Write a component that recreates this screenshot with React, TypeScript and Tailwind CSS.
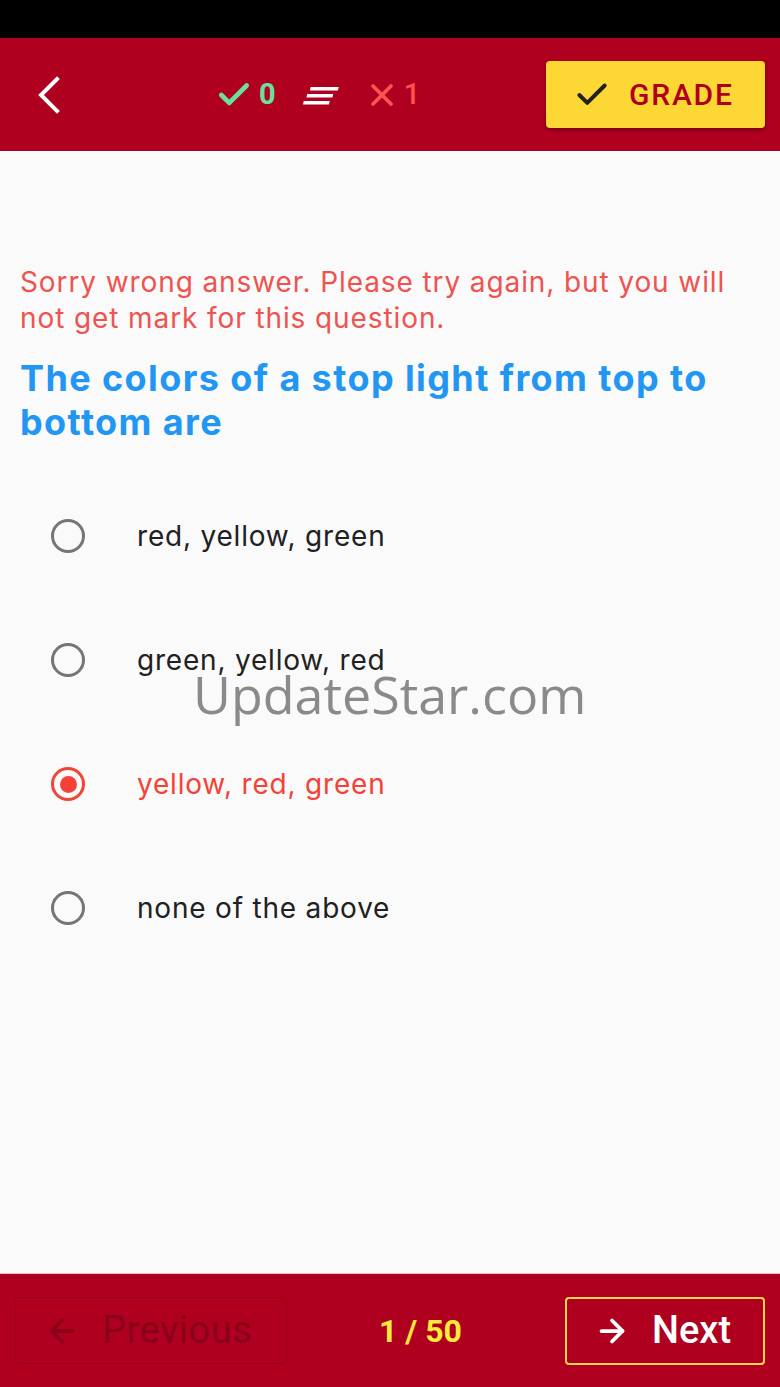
import { ArrowLeft, ArrowRight, Check, X } from "lucide-react";

const options = [
  { label: "red, yellow, green", selected: false },
  { label: "green, yellow, red", selected: false },
  { label: "yellow, red, green", selected: true },
  { label: "none of the above", selected: false },
];

function Radio({ selected }: { selected: boolean }) {
  if (selected) {
    return (
      <span className="flex h-[34px] w-[34px] items-center justify-center rounded-full border-[3.5px] border-[#f44336]">
        <span className="h-[17px] w-[17px] rounded-full bg-[#f44336]" />
      </span>
    );
  }
  return <span className="block h-[34px] w-[34px] rounded-full border-[3.5px] border-[#757575]" />;
}

function LinesIcon() {
  return (
    <svg width="36" height="24" viewBox="0 0 36 24" className="-skew-x-12">
      <rect x="6" y="4" width="28" height="3.5" fill="white" />
      <rect x="4" y="11" width="26" height="3.5" fill="white" />
      <rect x="2" y="18" width="26" height="3.5" fill="white" />
    </svg>
  );
}

function BackIcon() {
  return (
    <svg width="26" height="38" viewBox="0 0 26 38" fill="none">
      <polyline points="21,3 5,19 21,35" stroke="white" strokeWidth="4" strokeLinecap="square" />
    </svg>
  );
}

export default function App() {
  return (
    <div
      className="relative flex h-[1387px] w-[780px] flex-col bg-[#fafafa]"
      style={{ fontFamily: "Roboto, 'Liberation Sans', sans-serif" }}
    >
      <div className="h-[38px] bg-black" />

      <header className="flex h-[113px] items-center bg-[#b00020] pl-[36px] pr-[15px]">
        <BackIcon />
        <div className="ml-[153px] flex items-center">
          <Check size={38} strokeWidth={3} className="text-[#69e0a0]" />
          <span className="ml-[6px] text-[29px] font-bold text-[#69e0a0]">0</span>
          <span className="ml-[27px]">
            <LinesIcon />
          </span>
          <X size={36} strokeWidth={2.5} className="ml-[25px] text-[#ff5252]" />
          <span className="ml-[4px] text-[29px] font-medium text-[#ff5252]">1</span>
        </div>
        <button className="ml-auto flex h-[67px] w-[219px] items-center rounded-[4px] bg-[#fdd835] pl-[27px] shadow-[0_2px_4px_rgba(0,0,0,0.35)]">
          <Check size={38} strokeWidth={2.5} className="text-[#212121]" />
          <span className="ml-[18px] text-[30px] font-medium tracking-[1.8px] text-[#b00020]">GRADE</span>
        </button>
      </header>

      <main
        className="flex-1 px-[20px] pt-[113px]"
        style={{ fontFamily: "Inter, Roboto, 'Liberation Sans', sans-serif" }}
      >
        <p className="text-[28px] leading-[36px] tracking-[0.9px] text-[#ef5350]">
          Sorry wrong answer. Please try again, but you will not get mark for this question.
        </p>
        <h1 className="mt-[20px] pr-[30px] text-[36px] font-bold leading-[44px] tracking-[1.4px] text-[#2196f3]">
          The colors of a stop light from top to bottom are
        </h1>
        <ul className="mt-[30px]">
          {options.map((o) => (
            <li key={o.label} className="flex h-[124px] items-center pl-[31px]">
              <Radio selected={o.selected} />
              <span
                className={`ml-[52px] text-[28px] tracking-[0.8px] ${
                  o.selected ? "text-[#f44336]" : "text-[#212121]"
                }`}
              >
                {o.label}
              </span>
            </li>
          ))}
        </ul>
      </main>

      <span
        className="pointer-events-none absolute left-[193px] top-[668px] text-[52px] leading-none text-[#8a8a8a]"
        style={{ fontFamily: "'Open Sans', 'DejaVu Sans', sans-serif" }}
      >
        UpdateStar.com
      </span>

      <footer className="flex h-[114px] items-center border-t border-[#f5b7c2] bg-[#b00020] px-[15px]">
        <div className="flex h-[67px] w-[272px] items-center rounded-[3px] border border-[#9c001c] pl-[28px] text-[#8a0019]">
          <ArrowLeft size={36} strokeWidth={2.5} />
          <span className="ml-[22px] text-[38px] tracking-[0.5px]">Previous</span>
        </div>
        <span className="ml-[92px] text-[32px] font-bold text-[#ffeb3b]">1 / 50</span>
        <div className="ml-auto flex h-[68px] w-[200px] items-center rounded-[4px] border-2 border-[#ffd54f] pl-[27px] text-white">
          <ArrowRight size={36} strokeWidth={2.5} />
          <span className="ml-[22px] text-[38px] font-medium">Next</span>
        </div>
      </footer>
    </div>
  );
}
